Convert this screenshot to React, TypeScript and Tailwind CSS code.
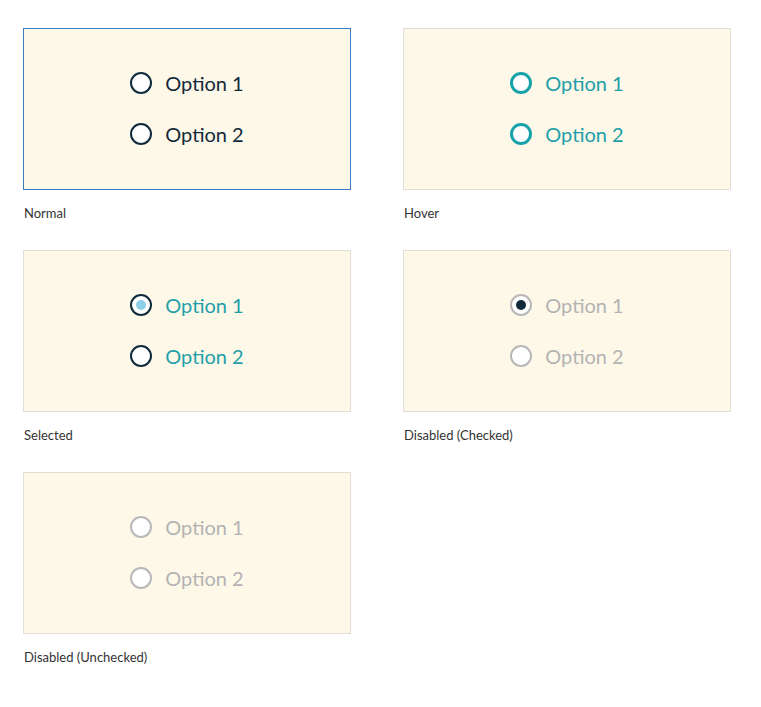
import React from 'react'

type Variant = 'normal' | 'hover' | 'selected' | 'disabledChecked' | 'disabledUnchecked'

interface RadioProps {
  label: string
  ring: string
  dot?: string
  text: string
}

function Radio({ label, ring, dot, text }: RadioProps) {
  return (
    <label className="flex items-center gap-[13px]">
      <span className={`flex h-[22px] w-[22px] items-center justify-center rounded-full bg-white ${ring}`}>
        {dot && <span className={`h-[10px] w-[10px] rounded-full ${dot}`} />}
      </span>
      <span className={`text-[20px] leading-none ${text}`}>{label}</span>
    </label>
  )
}

const styles: Record<Variant, { card: string; items: RadioProps[] }> = {
  normal: {
    card: 'border-[#3b7ec6]',
    items: [
      { label: 'Option 1', ring: 'border-2 border-[#0f2a3b]', text: 'text-[#13293a]' },
      { label: 'Option 2', ring: 'border-2 border-[#0f2a3b]', text: 'text-[#13293a]' },
    ],
  },
  hover: {
    card: 'border-[#e2ded6]',
    items: [
      { label: 'Option 1', ring: 'border-[3px] border-[#17a2aa]', text: 'text-[#1e9fa8]' },
      { label: 'Option 2', ring: 'border-[3px] border-[#17a2aa]', text: 'text-[#1e9fa8]' },
    ],
  },
  selected: {
    card: 'border-[#e2ded6]',
    items: [
      { label: 'Option 1', ring: 'border-2 border-[#0f2a3b]', dot: 'bg-[#8ccfe6]', text: 'text-[#1e9fa8]' },
      { label: 'Option 2', ring: 'border-2 border-[#0f2a3b]', text: 'text-[#1e9fa8]' },
    ],
  },
  disabledChecked: {
    card: 'border-[#e2ded6]',
    items: [
      { label: 'Option 1', ring: 'border-2 border-[#b8b8b8]', dot: 'bg-[#0f2a3b]', text: 'text-[#b3b3b3]' },
      { label: 'Option 2', ring: 'border-2 border-[#b8b8b8]', text: 'text-[#b3b3b3]' },
    ],
  },
  disabledUnchecked: {
    card: 'border-[#e2ded6]',
    items: [
      { label: 'Option 1', ring: 'border-2 border-[#b8b8b8]', text: 'text-[#b3b3b3]' },
      { label: 'Option 2', ring: 'border-2 border-[#b8b8b8]', text: 'text-[#b3b3b3]' },
    ],
  },
}

function Demo({ variant, caption }: { variant: Variant; caption: string }) {
  const s = styles[variant]
  return (
    <div className="flex h-[192px] w-[328px] flex-col">
      <div className={`flex h-[162px] flex-col items-center justify-center gap-[29px] border bg-[#fef8e9] pb-[2px] ${s.card}`}>
        {s.items.map(item => (
          <Radio key={item.label} {...item} />
        ))}
      </div>
      <div className="mt-[16px] pl-px text-[13px] leading-[14px] text-[#333333]">{caption}</div>
    </div>
  )
}

export default function App() {
  return (
    <div
      className="min-h-[707px] bg-white pl-[23px] pt-[28px]"
      style={{ fontFamily: 'Lato, "Open Sans", sans-serif' }}
    >
      <div className="grid w-[708px] grid-cols-[328px_328px] gap-x-[52px] gap-y-[30px]">
        <Demo variant="normal" caption="Normal" />
        <Demo variant="hover" caption="Hover" />
        <Demo variant="selected" caption="Selected" />
        <Demo variant="disabledChecked" caption="Disabled (Checked)" />
        <Demo variant="disabledUnchecked" caption="Disabled (Unchecked)" />
      </div>
    </div>
  )
}
